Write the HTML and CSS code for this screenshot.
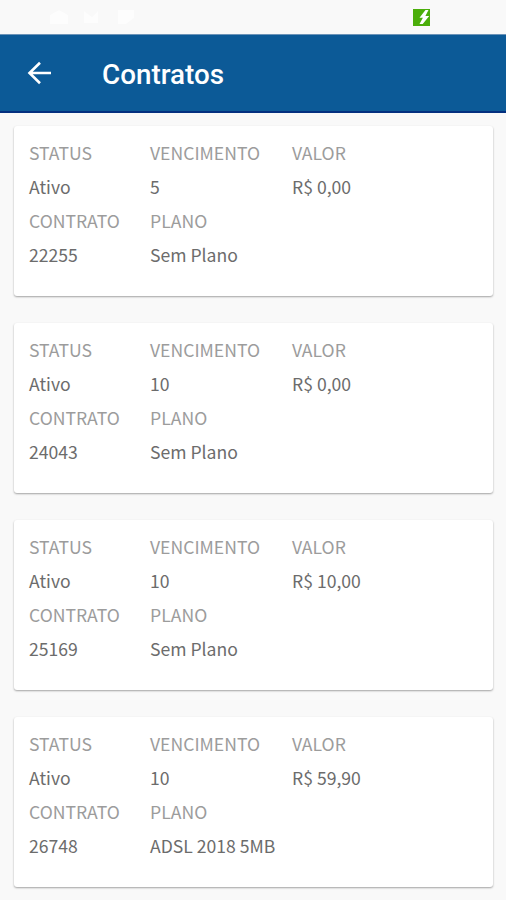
FILE: index.html
```html
<!DOCTYPE html>
<html lang="pt-BR">
<head>
    <meta charset="UTF-8">
    <meta name="viewport" content="width=device-width, initial-scale=1.0">
    <title>Contratos</title>
    <link rel="stylesheet" href="styles.css">
</head>
<body>
    <div class="status-bar">
        <svg class="notifications" width="122" height="16" viewBox="0 0 122 16">
            <path d="M36 6l9-5 9 5v9H36zM70 2l8 6 6-6v12H70zM104 1h16v8l-8 6h-8z"/>
        </svg>
        <svg class="battery" width="17" height="17" viewBox="0 0 17 17">
            <rect width="17" height="17" fill="#4bae0b"/>
            <path d="M12.5 1L6.5 8.8h3.4L6.5 15h3.2L16.2 7h-3.8L15.5 1z" fill="#fff"/>
        </svg>
    </div>
    <header class="toolbar">
        <svg class="back" width="24" height="24" viewBox="0 0 24 24">
            <path d="M13 1.7L2.5 12 13 22.3M2.5 12H24"/>
        </svg>
        <h1>Contratos</h1>
    </header>
    <main class="list">
        <div class="card">
            <div class="label">STATUS</div>
            <div class="label">VENCIMENTO</div>
            <div class="label">VALOR</div>
            <div>Ativo</div>
            <div>5</div>
            <div>R$ 0,00</div>
            <div class="label">CONTRATO</div>
            <div class="label plan">PLANO</div>
            <div>22255</div>
            <div class="plan">Sem Plano</div>
        </div>
        <div class="card">
            <div class="label">STATUS</div>
            <div class="label">VENCIMENTO</div>
            <div class="label">VALOR</div>
            <div>Ativo</div>
            <div>10</div>
            <div>R$ 0,00</div>
            <div class="label">CONTRATO</div>
            <div class="label plan">PLANO</div>
            <div>24043</div>
            <div class="plan">Sem Plano</div>
        </div>
        <div class="card">
            <div class="label">STATUS</div>
            <div class="label">VENCIMENTO</div>
            <div class="label">VALOR</div>
            <div>Ativo</div>
            <div>10</div>
            <div>R$ 10,00</div>
            <div class="label">CONTRATO</div>
            <div class="label plan">PLANO</div>
            <div>25169</div>
            <div class="plan">Sem Plano</div>
        </div>
        <div class="card">
            <div class="label">STATUS</div>
            <div class="label">VENCIMENTO</div>
            <div class="label">VALOR</div>
            <div>Ativo</div>
            <div>10</div>
            <div>R$ 59,90</div>
            <div class="label">CONTRATO</div>
            <div class="label plan">PLANO</div>
            <div>26748</div>
            <div class="plan">ADSL 2018 5MB</div>
        </div>
    </main>
</body>
</html>
```
FILE: styles.css
```css
* {
    box-sizing: border-box;
}
body {
    margin: 0;
    height: 900px;
    overflow: hidden;
    background: #f9f9f9;
    font-family: "Noto Sans CJK JP", "Noto Sans", sans-serif;
}
.status-bar {
    display: flex;
    justify-content: space-between;
    align-items: center;
    height: 34px;
    padding: 0 76px 0 14px;
}
.notifications {
    fill: #fff;
    opacity: 0.7;
}
.toolbar {
    display: flex;
    align-items: center;
    height: 79px;
    padding: 0 27px;
    background: #0c5a97;
    border-top: 1px solid #6b93b8;
    border-bottom: 2px solid #04307f;
}
.back {
    fill: none;
    stroke: #fff;
    stroke-width: 2.6;
}
.toolbar h1 {
    margin: 3px 0 0 51px;
    color: #fff;
    font-family: Roboto, sans-serif;
    font-size: 27.8px;
    font-weight: 500;
}
.list {
    display: flex;
    flex-direction: column;
    gap: 27px;
    padding: 13px 13px 0 14px;
}
.card {
    display: grid;
    grid-template-columns: 121px 142px 1fr;
    grid-auto-rows: 34px;
    height: 170px;
    padding: 10px 15px;
    border-radius: 3px;
    background: #fff;
    box-shadow: 0 1px 2px rgba(0, 0, 0, 0.35);
    color: #6c6c6c;
    font-size: 17.6px;
    line-height: 34px;
    white-space: nowrap;
}
.label {
    color: #9c9c9c;
}
.plan {
    grid-column: span 2;
}
```
